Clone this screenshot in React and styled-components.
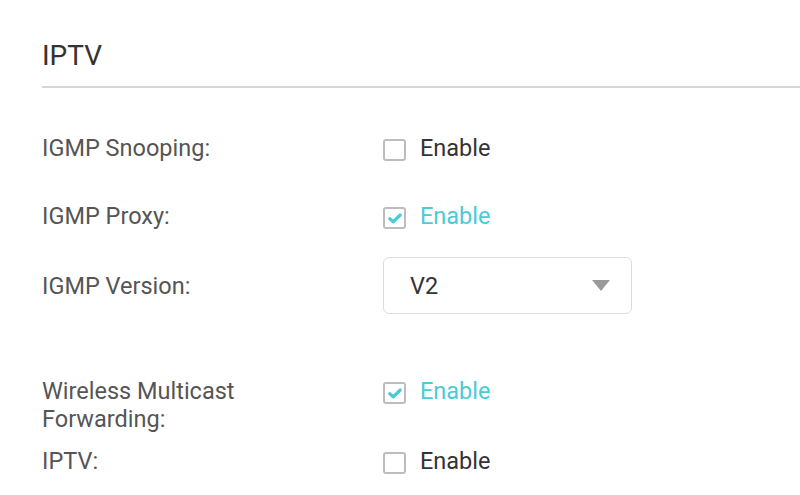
import React from "react";
import styled, { createGlobalStyle } from "styled-components";

const Global = createGlobalStyle`
  html, body { margin: 0; padding: 0; background: #fff; }
  body { font-family: Roboto, "Liberation Sans", sans-serif; }
`;

const Page = styled.div`
  padding: 40px 0 0 42px;
  width: 800px;
  box-sizing: border-box;
`;

const Heading = styled.h2`
  margin: 0;
  font-size: 28px;
  font-weight: 400;
  line-height: 32px;
  color: #333;
  padding-bottom: 14px;
  border-bottom: 2px solid #d6d6d6;
`;

const Row = styled.div`
  display: flex;
  align-items: ${(p) => (p.$center ? "center" : "flex-start")};
  margin-top: ${(p) => p.$mt}px;
`;

const Label = styled.div`
  width: 341px;
  flex: none;
  font-size: 23.5px;
  line-height: 28px;
  color: #555;
`;

const CheckLine = styled.label`
  display: flex;
  align-items: flex-start;
  font-size: 23.5px;
  line-height: 28px;
  color: ${(p) => (p.$on ? "#4acbd6" : "#333")};
`;

const Box = styled.span`
  width: 23px;
  height: 22px;
  box-sizing: border-box;
  border: 2px solid #bdbdbd;
  border-radius: 3px;
  margin-top: 5px;
  margin-right: 14px;
  display: flex;
  align-items: center;
  justify-content: center;
  flex: none;
`;

const Select = styled.div`
  width: 249px;
  height: 57px;
  box-sizing: border-box;
  border: 1px solid #dcdcdc;
  border-radius: 6px;
  display: flex;
  align-items: center;
  justify-content: space-between;
  padding: 0 21px 0 26px;
  font-size: 23.5px;
  color: #333;
`;

function Check({ on }) {
  return (
    <CheckLine $on={on}>
      <Box>
        {on && (
          <svg width="14" height="11" viewBox="0 0 14 11">
            <path
              d="M1.8 5.8 L5.2 8.8 L12.2 2"
              fill="none"
              stroke="#4acbd6"
              strokeWidth="3.2"
              strokeLinecap="round"
              strokeLinejoin="round"
            />
          </svg>
        )}
      </Box>
      Enable
    </CheckLine>
  );
}

export default function App() {
  return (
    <>
      <Global />
      <Page>
        <Heading>IPTV</Heading>
        <Row $mt={46}>
          <Label>IGMP Snooping:</Label>
          <Check on={false} />
        </Row>
        <Row $mt={40}>
          <Label>IGMP Proxy:</Label>
          <Check on />
        </Row>
        <Row $mt={27} $center>
          <Label>IGMP Version:</Label>
          <Select>
            <span>V2</span>
            <svg width="18" height="11" viewBox="0 0 18 11">
              <path d="M0 0 H18 L9 11 Z" fill="#9a9a9a" />
            </svg>
          </Select>
        </Row>
        <Row $mt={63}>
          <Label>
            Wireless Multicast
            <br />
            Forwarding:
          </Label>
          <Check on />
        </Row>
        <Row $mt={14}>
          <Label>IPTV:</Label>
          <Check on={false} />
        </Row>
      </Page>
    </>
  );
}
